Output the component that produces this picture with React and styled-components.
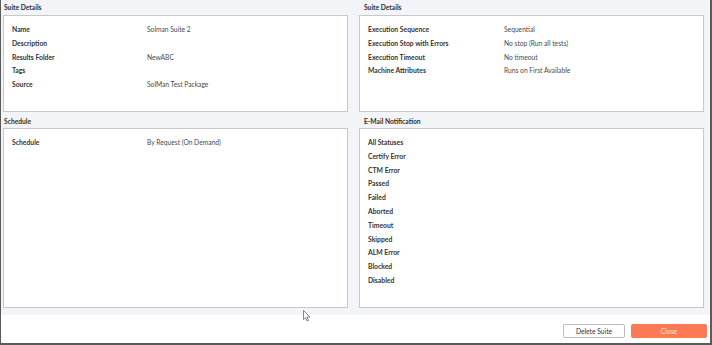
import React from "react";
import styled, { createGlobalStyle } from "styled-components";

const Global = createGlobalStyle`
  html, body { margin: 0; padding: 0; }
  body { font-family: Lato, "Open Sans", Arial, sans-serif; background: #fff; }
  * { box-sizing: border-box; }
`;

const Frame = styled.div`
  position: relative;
  width: 712px;
  height: 345px;
  display: flex;
  flex-direction: column;
  border-left: 1px solid #5a5a5a;
  border-right: 2px solid #5a5a5a;
  border-bottom: 2px solid #5a5a5a;
  background: #fff;
`;

const Content = styled.div`
  height: 315px;
  background: #f2f4f8;
  padding: 0 7px 7px 2px;
  display: grid;
  grid-template-columns: 345px 345px;
  grid-template-rows: 112px 196px;
  column-gap: 11px;
`;

const Section = styled.section`
  display: flex;
  flex-direction: column;
`;

const Heading = styled.h3`
  margin: 0;
  height: ${(p) => p.$h}px;
  line-height: ${(p) => p.$h - (p.$shift || 0)}px;
  padding-top: ${(p) => p.$shift || 0}px;
  padding-left: ${(p) => p.$indent || 0}px;
  font-size: 6.7px;
  font-weight: 700;
  color: #2f2f2f;
  white-space: nowrap;
`;

const Box = styled.div`
  flex: 1;
  background: #fff;
  border: 1px solid #c6c8cc;
  padding: 7px 8px;
`;

const Row = styled.div`
  display: grid;
  grid-template-columns: ${(p) => p.$col}px auto;
  align-items: center;
  height: 13.8px;
  line-height: 13.8px;
  white-space: nowrap;
`;

const Label = styled.span`
  font-size: 6.8px;
  font-weight: 700;
  color: #333;
`;

const Value = styled.span`
  font-size: 6.7px;
  color: #4a4a4a;
`;

const Footer = styled.div`
  flex: 1;
  display: flex;
  justify-content: flex-end;
  align-items: center;
  gap: 6px;
  padding-right: 3px;
  padding-top: 4px;
`;

const Button = styled.button`
  height: 14px;
  width: ${(p) => p.$w}px;
  padding: 0;
  border-radius: 2px;
  font-family: inherit;
  font-size: 6.7px;
  cursor: pointer;
  border: 1px solid ${(p) => (p.$primary ? "#fb7a55" : "#b9bcc2")};
  background: ${(p) => (p.$primary ? "#fb7a55" : "#fff")};
  color: ${(p) => (p.$primary ? "#ffe9e2" : "#333")};
`;

const Cursor = styled.svg`
  position: absolute;
  left: 302px;
  top: 310px;
`;

const suiteLeft = [
  ["Name", "Solman Suite 2"],
  ["Description", ""],
  ["Results Folder", "NewABC"],
  ["Tags", ""],
  ["Source", "SolMan Test Package"],
];

const suiteRight = [
  ["Execution Sequence", "Sequential"],
  ["Execution Stop with Errors", "No stop (Run all tests)"],
  ["Execution Timeout", "No timeout"],
  ["Machine Attributes", "Runs on First Available"],
];

const statuses = [
  "All Statuses",
  "Certify Error",
  "CTM Error",
  "Passed",
  "Failed",
  "Aborted",
  "Timeout",
  "Skipped",
  "ALM Error",
  "Blocked",
  "Disabled",
];

export default function App() {
  return (
    <Frame>
      <Global />
      <Content>
        <Section>
          <Heading $h={15} $indent={1}>Suite Details</Heading>
          <Box>
            {suiteLeft.map(([l, v]) => (
              <Row key={l} $col={135}>
                <Label>{l}</Label>
                <Value>{v}</Value>
              </Row>
            ))}
          </Box>
        </Section>
        <Section>
          <Heading $h={15} $indent={5}>Suite Details</Heading>
          <Box>
            {suiteRight.map(([l, v]) => (
              <Row key={l} $col={136}>
                <Label>{l}</Label>
                <Value>{v}</Value>
              </Row>
            ))}
          </Box>
        </Section>
        <Section>
          <Heading $h={16} $indent={1} $shift={2}>Schedule</Heading>
          <Box>
            <Row $col={135}>
              <Label>Schedule</Label>
              <Value>By Request (On Demand)</Value>
            </Row>
          </Box>
        </Section>
        <Section>
          <Heading $h={16} $indent={5} $shift={2}>E-Mail Notification</Heading>
          <Box>
            {statuses.map((s) => (
              <Row key={s} $col={136}>
                <Label>{s}</Label>
              </Row>
            ))}
          </Box>
        </Section>
      </Content>
      <Footer>
        <Button $w={62}>Delete Suite</Button>
        <Button $w={76} $primary>Close</Button>
      </Footer>
      <Cursor width="8" height="12" viewBox="0 0 8 12">
        <path d="M0.5 0.5 L0.5 9.5 L2.6 7.6 L4.1 11 L5.5 10.4 L4 7.1 L6.9 7.1 Z" fill="#fff" stroke="#666" strokeWidth="0.8" strokeLinejoin="round" />
      </Cursor>
    </Frame>
  );
}
